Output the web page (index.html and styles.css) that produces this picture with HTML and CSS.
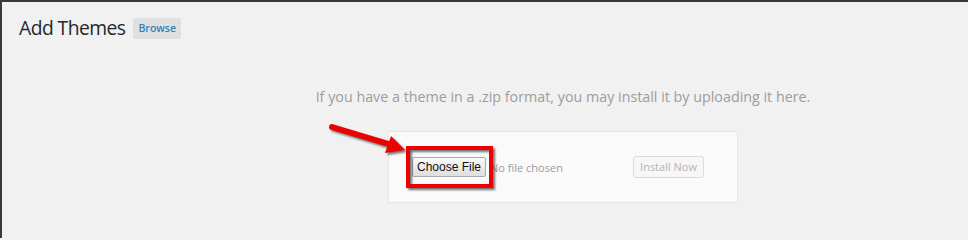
FILE: index.html
```html
<!DOCTYPE html>
<html>
<head>
<meta charset="utf-8">
<link rel="stylesheet" href="styles.css">
</head>
<body>
<div class="screen">
  <div class="page-head">
    <h1 class="page-title">Add Themes</h1>
    <a class="title-action" href="#">Browse</a>
  </div>
  <div class="upload-theme">
    <p class="install-help">If you have a theme in a .zip format, you may install it by uploading it here.</p>
    <form class="upload-form">
      <div class="file-field">
        <button type="button" class="choose-btn">Choose File</button>
        <span class="file-status">No file chosen</span>
      </div>
      <button type="button" class="install-btn">Install Now</button>
    </form>
  </div>
  <svg class="annotation" width="968" height="238" viewBox="0 0 968 238">
    <line x1="332" y1="127" x2="392" y2="145" stroke="#ee0000" stroke-width="6" stroke-linecap="round"/>
    <polygon points="405,150 385,153 391,136" fill="#ee0000"/>
    <rect x="408" y="148" width="83" height="38" fill="none" stroke="#ee0000" stroke-width="4"/>
  </svg>
</div>
</body>
</html>
```
FILE: styles.css
```css
html, body {
  margin: 0;
  padding: 0;
}
body {
  background: #f1f1f1;
  font-family: "Open Sans", "Liberation Sans", sans-serif;
}
.screen {
  position: relative;
  box-sizing: border-box;
  width: 968px;
  height: 238px;
  border-top: 2px solid #3a3a3a;
  border-left: 2px solid #3a3a3a;
  overflow: hidden;
}
.page-head {
  display: flex;
  align-items: center;
  gap: 8px;
  padding: 12px 0 0 17px;
}
.page-title {
  margin: 0;
  font-size: 19.3px;
  letter-spacing: -0.55px;
  font-weight: 400;
  line-height: 28px;
  color: #23282d;
}
.title-action {
  display: block;
  background: #e0e0e0;
  color: #2e82b8;
  font-size: 10.5px;
  font-weight: 600;
  line-height: 13px;
  padding: 4px 5px;
  border-radius: 2px;
  text-decoration: none;
}
.upload-theme {
  display: flex;
  flex-direction: column;
  align-items: center;
  padding-left: 156px;
  margin-top: 45px;
}
.install-help {
  margin: 0 0 24px;
  font-size: 14.3px;
  line-height: 20px;
  color: #9d9d9d;
}
.upload-form {
  box-sizing: border-box;
  width: 350px;
  height: 72px;
  background: #fafafa;
  border: 1px solid #e6e6e6;
  display: flex;
  align-items: center;
  justify-content: space-between;
  padding: 0 33px 0 23px;
}
.file-field {
  display: flex;
  align-items: center;
  gap: 4px;
}
.choose-btn {
  font-family: "Liberation Sans", Arial, sans-serif;
  font-size: 12px;
  line-height: 14px;
  color: #111;
  padding: 2px 4px;
  border: 1px solid #a9a9a9;
  border-radius: 2px;
  background: linear-gradient(#fafafa, #dedede);
}
.file-status {
  font-size: 11px;
  color: #9a9a9a;
}
.install-btn {
  font-family: "Open Sans", "Liberation Sans", sans-serif;
  font-size: 11px;
  line-height: 14px;
  color: #b3b3b3;
  background: #f7f7f7;
  border: 1px solid #dcdcdc;
  border-radius: 3px;
  padding: 3px 6px;
}
.annotation {
  position: absolute;
  left: -2px;
  top: -2px;
  pointer-events: none;
  filter: drop-shadow(2px 2px 1px rgba(0, 0, 0, 0.55));
}
```
